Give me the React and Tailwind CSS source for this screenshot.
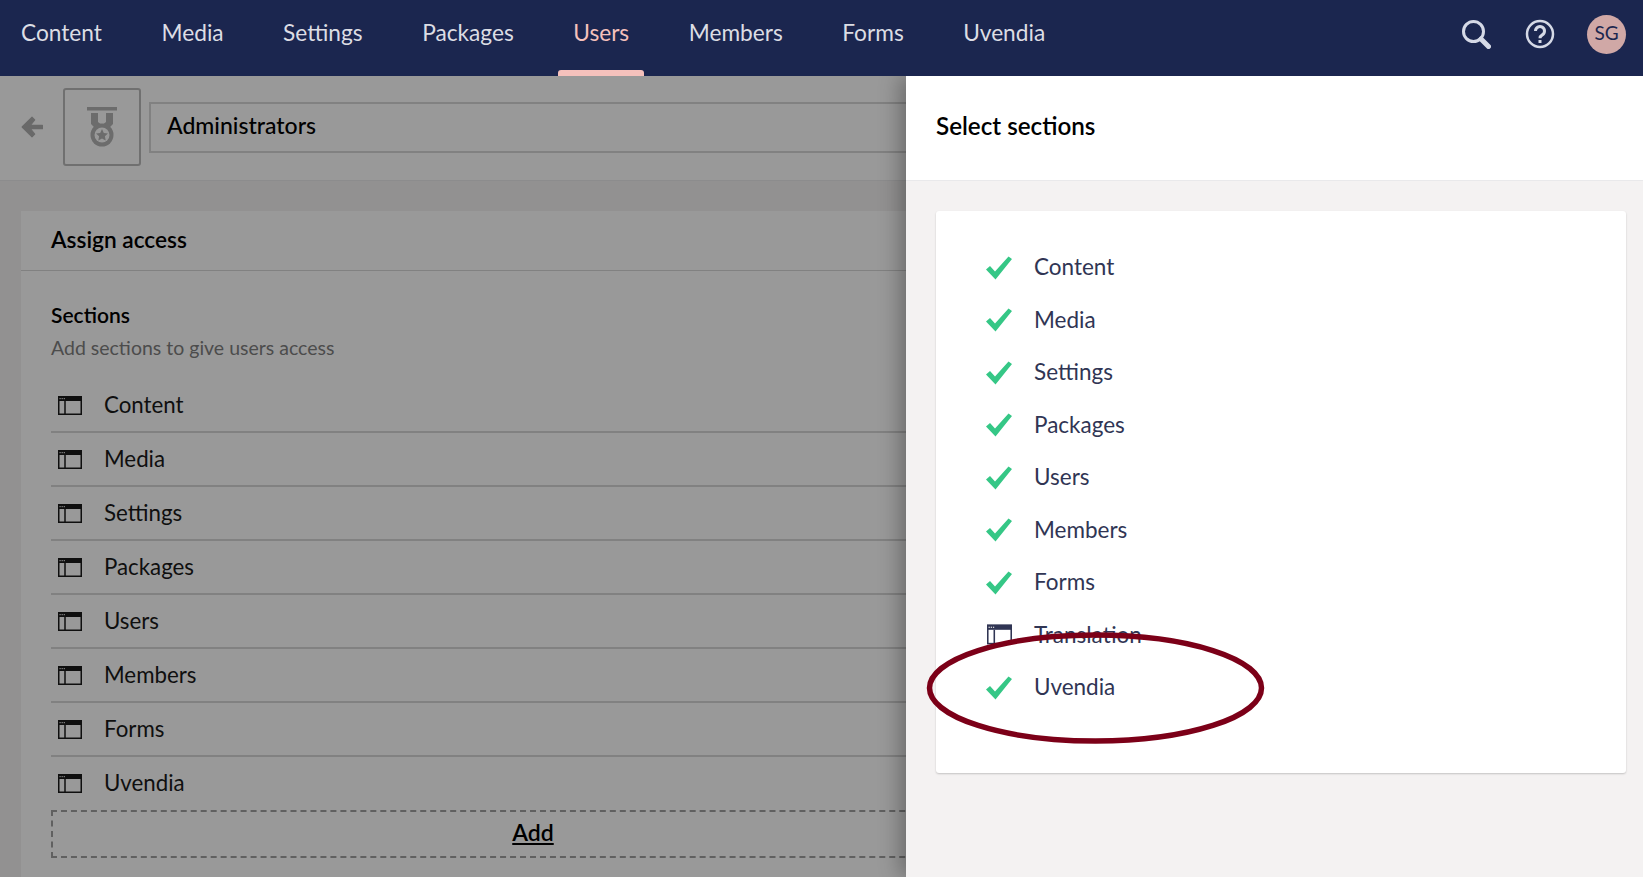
import React from 'react';

const navItems = ['Content', 'Media', 'Settings', 'Packages', 'Users', 'Members', 'Forms', 'Uvendia'];
const leftRows = ['Content', 'Media', 'Settings', 'Packages', 'Users', 'Members', 'Forms', 'Uvendia'];
const sections = [
  { name: 'Content', on: true },
  { name: 'Media', on: true },
  { name: 'Settings', on: true },
  { name: 'Packages', on: true },
  { name: 'Users', on: true },
  { name: 'Members', on: true },
  { name: 'Forms', on: true },
  { name: 'Translation', on: false },
  { name: 'Uvendia', on: true },
];

function WindowIcon({ className }) {
  return (
    <svg viewBox="0 0 24 19" className={className} fill="none">
      <rect x="0.75" y="0.75" width="22.5" height="17.5" stroke="currentColor" strokeWidth="1.5" />
      <rect x="0" y="0" width="24" height="5" fill="currentColor" />
      <rect x="1.5" y="2" width="1.2" height="1.2" fill="#ddd" />
      <rect x="3.6" y="2" width="1.2" height="1.2" fill="#ddd" />
      <rect x="5.7" y="2" width="1.2" height="1.2" fill="#ddd" />
      <path d="M7 5v13" stroke="currentColor" strokeWidth="1.5" />
    </svg>
  );
}

function CheckIcon() {
  return (
    <svg viewBox="0 0 28 24" className="mt-[1px] h-[24px] w-[28px]">
      <path d="M1 13.5l4-3.5 5 5.5L23.5 0.5 27 3 10.5 23.5z" fill="#35c786" />
    </svg>
  );
}

function MedalIcon() {
  return (
    <svg viewBox="0 0 32 40" className="h-[40px] w-[32px]">
      <rect x="1" y="0" width="30" height="3.5" fill="#b4b4b4" />
      <path d="M5 6h7v9l4 3 4-3V6h7v11l-6 6H11l-6-6z" fill="#b4b4b4" />
      <circle cx="16" cy="28" r="11.5" fill="#b4b4b4" />
      <circle cx="16" cy="28" r="7.5" fill="#ffffff" />
      <path d="M16 22l1.8 3.9 4.2.5-3.1 2.9.8 4.2-3.7-2.1-3.7 2.1.8-4.2-3.1-2.9 4.2-.5z" fill="#b4b4b4" />
    </svg>
  );
}

export default function App() {
  return (
    <div className="relative h-[877px] w-[1643px] overflow-hidden bg-[#f4f2f2] font-['Lato',sans-serif]">
      {/* Top bar */}
      <header className="relative z-30 flex h-[76px] items-center justify-between bg-[#1b264f] pl-[21px] pr-[17px]">
        <nav className="flex h-full items-center gap-[59.5px]">
          {navItems.map((item) => (
            <a
              key={item}
              className={`relative flex h-full items-center pb-[10px] text-[22.7px] ${item === 'Users' ? 'text-[#f5c1bc]' : 'text-[#dcdde4]'}`}
            >
              {item}
              {item === 'Users' && (
                <span className="absolute -left-[15px] -right-[15px] bottom-0 h-[6px] rounded-t-[3px] bg-[#f5c1bc]" />
              )}
            </a>
          ))}
        </nav>
        <div className="mb-[8px] flex items-center">
          <svg viewBox="0 0 30 30" className="h-[30px] w-[30px] text-[#d5d9e6]" fill="none" stroke="currentColor">
            <circle cx="12.5" cy="12.5" r="10" strokeWidth="3" />
            <path d="M20 20l7.5 7.5" strokeWidth="5" strokeLinecap="round" />
          </svg>
          <svg viewBox="0 0 30 30" className="ml-[34px] h-[30px] w-[30px] text-[#d5d9e6]" fill="none" stroke="currentColor">
            <circle cx="15" cy="15" r="13" strokeWidth="2.5" />
            <path d="M10.5 12a4.5 4.5 0 1 1 6.8 3.9c-1.5.9-2.3 1.6-2.3 3.4" strokeWidth="3" />
            <path d="M15 21v3" strokeWidth="3" />
          </svg>
          <div className="ml-[32px] flex h-[39px] w-[39px] items-center justify-center rounded-full bg-[#d0a8a6] pb-[1px] text-[19px] text-[#1b264f]">
            SG
          </div>
        </div>
      </header>

      {/* Page under the dialog */}
      <main className="h-[801px] w-[1045px] overflow-hidden">
        <div className="flex h-[105px] items-center border-b border-[#e9e9eb] bg-white pb-[2px] pl-[21px]">
          <svg viewBox="0 0 20 20" className="h-[22px] w-[22px] text-[#b0b0b0]" fill="currentColor" stroke="currentColor" strokeLinejoin="round" strokeWidth="1">
            <path d="M10 1l2.5 2.5-4 5H19.5v3H8.5l4 5L10 19 1 10z" />
          </svg>
          <div className="ml-[20px] flex h-[78px] w-[78px] items-center justify-center rounded-[3px] border-2 border-[#bbbbbb]">
            <MedalIcon />
          </div>
          <div className="ml-[8px] flex h-[51px] flex-1 items-center border-2 border-[#d8d8d8] pb-[3px] pl-[16px] text-[23px] font-medium text-black">
            Administrators
          </div>
        </div>

        <section className="ml-[21px] mt-[30px] bg-white pb-[40px]">
          <h2 className="flex h-[60px] items-center border-b border-[#d8d8d8] pb-[1px] pl-[30px] text-[22.7px] font-semibold text-black">
            Assign access
          </h2>
          <div className="px-[30px] pt-[31px]">
            <h3 className="text-[21px] font-semibold leading-[26px] text-black">Sections</h3>
            <p className="mt-[7px] text-[19.5px] leading-[26px] text-[#7f7f7f]">Add sections to give users access</p>
            <ul className="mt-[18px]">
              {leftRows.map((row, i) => (
                <li
                  key={row}
                  className={`flex items-center pl-[7px] text-[22.3px] text-[#1a1a1a] ${i < leftRows.length - 1 ? 'h-[54px] border-b-2 border-[#d8d8d8]' : 'h-[53px]'}`}
                >
                  <WindowIcon className="h-[19px] w-[24px]" />
                  <span className="ml-[22px] pb-[1px]">{row}</span>
                </li>
              ))}
            </ul>
            <div className="flex h-[48px] items-center justify-center border-2 border-dashed border-[#a0a0a0] pb-[3px] text-[23px] font-semibold text-black underline">
              Add
            </div>
          </div>
        </section>
      </main>

      {/* Dim layer */}
      <div className="absolute inset-x-0 bottom-0 top-[76px] z-10 bg-black/40" />

      {/* Right panel */}
      <aside className="absolute bottom-0 right-0 top-[76px] z-20 w-[737px] bg-[#f4f2f2] shadow-[-6px_0_20px_rgba(0,0,0,0.3)]">
        <div className="flex h-[105px] items-center border-b border-[#e9e9eb] bg-white pb-[4px] pl-[30px] text-[24.2px] font-semibold text-black">
          Select sections
        </div>
        <div className="ml-[30px] mr-[17px] mt-[30px] h-[562px] rounded-[3px] bg-white pl-[49px] pt-[30px] shadow-[0_1px_2px_rgba(0,0,0,0.2)]">
          <ul>
            {sections.map((s) => (
              <li key={s.name} className="flex h-[52.5px] items-center text-[22.5px] text-[#303554]">
                <span className="flex w-[28px] justify-center">
                  {s.on ? <CheckIcon /> : <WindowIcon className="h-[21px] w-[25px]" />}
                </span>
                <span className="ml-[21px]">{s.name}</span>
              </li>
            ))}
          </ul>
        </div>
      </aside>

      {/* Hand-drawn marker around the Uvendia row */}
      <svg className="pointer-events-none absolute left-[925px] top-[630px] z-40 h-[116px] w-[341px]" viewBox="0 0 341 116" fill="none">
        <ellipse cx="170.5" cy="58" rx="166" ry="53" stroke="#7c0018" strokeWidth="5.5" />
      </svg>
    </div>
  );
}
